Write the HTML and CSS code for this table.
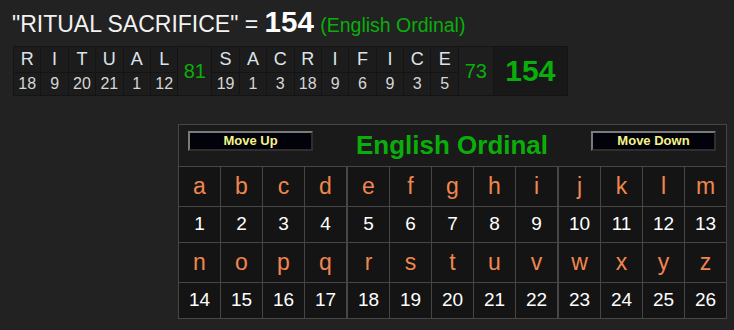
FILE: index.html
```html
<!DOCTYPE html>
<html>
<head>
<meta charset="utf-8">
<link rel="stylesheet" href="styles.css">
</head>
<body>
<div class="page">
  <div class="title">"RITUAL SACRIFICE" = <b class="total">154</b> <span class="cipher">(English Ordinal)</span></div>
  <table class="breakdown">
    <tr class="letters">
      <td>R</td><td>I</td><td>T</td><td>U</td><td>A</td><td>L</td>
      <td class="sum" rowspan="2">81</td>
      <td>S</td><td>A</td><td>C</td><td>R</td><td>I</td><td>F</td><td>I</td><td>C</td><td>E</td>
      <td class="sum sum-b" rowspan="2">73</td>
      <td class="grand" rowspan="2">154</td>
    </tr>
    <tr class="values">
      <td>18</td><td>9</td><td>20</td><td>21</td><td>1</td><td>12</td>
      <td>19</td><td>1</td><td>3</td><td>18</td><td>9</td><td>6</td><td>9</td><td>3</td><td>5</td>
    </tr>
  </table>
  <table class="chart">
    <tr class="chart-head">
      <td colspan="13">
        <div class="head-bar">
          <button class="move">Move Up</button>
          <span class="chart-title">English Ordinal</span>
          <button class="move">Move Down</button>
        </div>
      </td>
    </tr>
    <tr class="ltr">
      <td>a</td><td>b</td><td>c</td><td class="grp">d</td><td>e</td><td>f</td><td>g</td><td>h</td><td class="grp">i</td><td>j</td><td>k</td><td>l</td><td>m</td>
    </tr>
    <tr class="num">
      <td>1</td><td>2</td><td>3</td><td class="grp">4</td><td>5</td><td>6</td><td>7</td><td>8</td><td class="grp">9</td><td>10</td><td>11</td><td>12</td><td>13</td>
    </tr>
    <tr class="ltr ltr2">
      <td>n</td><td>o</td><td>p</td><td class="grp">q</td><td>r</td><td>s</td><td>t</td><td>u</td><td class="grp">v</td><td>w</td><td>x</td><td>y</td><td>z</td>
    </tr>
    <tr class="num">
      <td>14</td><td>15</td><td>16</td><td class="grp">17</td><td>18</td><td>19</td><td>20</td><td>21</td><td class="grp">22</td><td>23</td><td>24</td><td>25</td><td>26</td>
    </tr>
  </table>
</div>
</body>
</html>
```

FILE: styles.css
```css
html, body {
  margin: 0;
  padding: 0;
  background: #222222;
}
body {
  font-family: "Liberation Sans", Arial, sans-serif;
  color: #eeeeee;
  width: 734px;
  height: 330px;
  overflow: hidden;
}
.page {
  padding-top: 6px;
}
.title {
  margin-left: 12px;
  font-size: 23px;
  line-height: 32px;
  height: 32px;
  color: #f2f2f2;
  white-space: nowrap;
}
.total {
  font-size: 29.5px;
  font-weight: bold;
  color: #ffffff;
}
.cipher {
  font-size: 19.5px;
  color: #0aae0a;
}
.breakdown {
  margin-left: 13px;
  margin-top: 8px;
  border-collapse: separate;
  border-spacing: 1px;
  background: #141414;
}
.breakdown td {
  padding: 0;
  width: 26.4px;
  text-align: center;
  background: #1c1c1c;
  color: #dde3ea;
}
.breakdown .letters td {
  height: 24.7px;
  font-size: 18px;
  line-height: 24px;
}
.breakdown .values td {
  height: 22.3px;
  font-size: 16px;
  line-height: 22px;
  color: #d6d6d6;
}
.breakdown td.sum {
  width: 33px;
  font-size: 20px;
  color: #0aae0a;
  background: #1e1e1e;
}
.breakdown td.sum-b {
  width: 34px;
}
.breakdown td.grand {
  width: 73px;
  font-size: 30px;
  font-weight: bold;
  color: #0aae0a;
  background: #181818;
}
.chart {
  margin-left: 178px;
  margin-top: 28px;
  border-collapse: collapse;
  border: 1px solid #464646;
  table-layout: fixed;
}
.chart td {
  border: 1px solid #464646;
  width: 41px;
  padding: 0;
  text-align: center;
  background: #141414;
}
.chart td.grp {
  border-right: 2px solid #464646;
}
.chart-head td {
  background: #1a1a1a;
  height: 41px;
}
.head-bar {
  display: flex;
  align-items: center;
  justify-content: space-between;
  padding: 0 10px 0 9px;
  height: 41px;
}
.move {
  width: 125px;
  height: 20px;
  margin-top: -9px;
  padding: 0;
  background: #02020a;
  border: 2px solid;
  border-color: #7a7a7a #2e2e2e #2e2e2e #7a7a7a;
  color: #f4f48a;
  font-family: "Liberation Sans", Arial, sans-serif;
  font-weight: bold;
  font-size: 13px;
  line-height: 16px;
}
.chart-title {
  font-size: 26px;
  font-weight: bold;
  color: #0aae0a;
  line-height: 30px;
}
.chart .ltr td {
  height: 39px;
  font-size: 23px;
  color: #f0864f;
}
.chart .num td {
  height: 34px;
  font-size: 19px;
  color: #ffffff;
}
.chart .ltr2 td {
  height: 39px;
}
.chart .num td:last-child {
  height: 35px;
}
```
